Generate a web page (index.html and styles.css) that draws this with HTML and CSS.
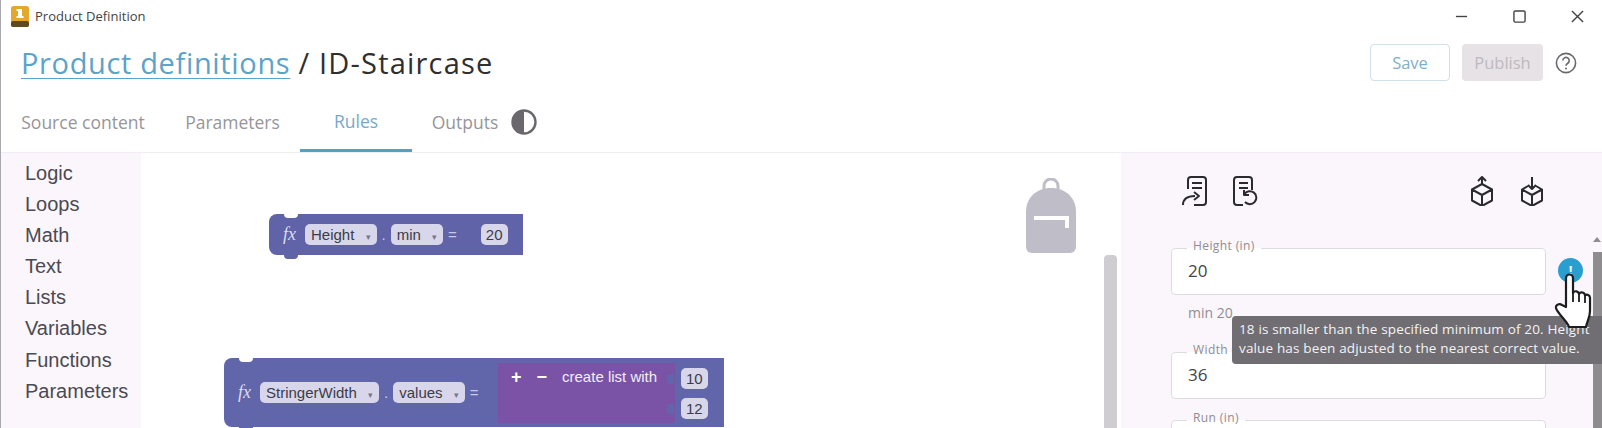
FILE: index.html
```html
<!DOCTYPE html>
<html lang="en">
<head>
  <meta charset="UTF-8" />
  <title>Product Definition</title>
  <link rel="stylesheet" href="styles.css">
</head>
<body>
  <div class="window">

    <div class="titlebar">
      <svg class="app-icon" viewBox="0 0 18 21">
        <rect width="18" height="21" rx="2.5" fill="#e3a92c"/>
        <rect y="15" width="18" height="6" rx="2" fill="#5d4a1e"/>
        <rect x="7" y="3" width="4" height="9" fill="#fff"/>
        <rect x="5.5" y="3" width="4" height="2" fill="#fff"/>
        <rect x="5.5" y="10" width="7" height="2" fill="#fff"/>
      </svg>
      <div class="app-name">Product Definition</div>
      <div class="win-controls">
        <svg viewBox="0 0 14 14"><path d="M1 7h12" /></svg>
        <svg viewBox="0 0 14 14"><rect x="1" y="1" width="12" height="12" rx="1.5" /></svg>
        <svg viewBox="0 0 14 14"><path d="M1 1l12 12M13 1L1 13" /></svg>
      </div>
    </div>

    <div class="heading">
      <div class="crumb"><a class="crumb-link">Product definitions</a> <span class="crumb-sep">/</span> <span class="crumb-name">ID-Staircase</span></div>
      <div class="actions">
        <button class="btn btn-save">Save</button>
        <button class="btn btn-publish">Publish</button>
        <svg class="help" viewBox="0 0 22 22">
          <circle cx="11" cy="11" r="9.6" />
          <path d="M7.800 8.600a3.200 3.200 0 1 1 4.900 2.700c-1.100.7-1.700 1.200-1.700 2.500" />
          <circle class="dot" cx="11" cy="16.600" r="1" />
        </svg>
      </div>
    </div>

    <div class="tabs">
      <div class="tab tab-source">Source content</div>
      <div class="tab tab-params">Parameters</div>
      <div class="tab tab-rules active">Rules</div>
      <div class="tab tab-outputs">Outputs</div>
      <svg class="half" viewBox="0 0 26 26">
        <circle cx="13" cy="13" r="11.500" fill="#fff" stroke="#6a686c" stroke-width="2.400"/>
        <path d="M13 1.500a11.500 11.500 0 0 0 0 23z" fill="#6a686c"/>
      </svg>
    </div>

    <div class="main">
      <div class="toolbox">
        <div class="cat">Logic</div>
        <div class="cat">Loops</div>
        <div class="cat">Math</div>
        <div class="cat">Text</div>
        <div class="cat">Lists</div>
        <div class="cat">Variables</div>
        <div class="cat">Functions</div>
        <div class="cat">Parameters</div>
      </div>

      <div class="workspace">
        <div class="block block-min">
          <span class="fx">fx</span>
          <span class="chip">Height <i class="caret">▾</i></span>
          <span class="op">.</span>
          <span class="chip">min <i class="caret">▾</i></span>
          <span class="op">=</span>
          <span class="chip chip-num">20</span>
        </div>

        <div class="block block-list">
          <span class="fx">fx</span>
          <span class="chip">StringerWidth <i class="caret">▾</i></span>
          <span class="op">.</span>
          <span class="chip">values <i class="caret">▾</i></span>
          <span class="op">=</span>
          <div class="list-block">
            <div class="list-label"><b>+</b><b>−</b><span>create list with</span></div>
            <div class="list-items">
              <span class="chip chip-num">10</span>
              <span class="chip chip-num">12</span>
            </div>
          </div>
        </div>

        <svg class="backpack" viewBox="0 0 50 76">
          <path d="M18 12V8a7 7 0 0 1 14 0v4" fill="none" stroke="#bfbdc7" stroke-width="3"/>
          <path d="M25 10C10 10 0 20 0 34v35a6 6 0 0 0 6 6h38a6 6 0 0 0 6-6V34C50 20 40 10 25 10z" fill="#bfbdc7"/>
          <path d="M8 40h33v10" fill="none" stroke="#fff" stroke-width="4"/>
        </svg>

        <div class="ws-scroll"></div>
      </div>

      <div class="panel">
        <div class="panel-body">
          <div class="panel-icons">
            <div class="icon-group">
              <svg viewBox="0 0 26 30">
                <path d="M6 13V4a3 3 0 0 1 3-3h12a3 3 0 0 1 3 3v22a3 3 0 0 1-3 3H12" />
                <path d="M10 7h10M10 12h10" />
                <path d="M1 29c0-6 4-9 12-9M12 16l5 4-5 4" />
              </svg>
              <svg viewBox="0 0 26 30">
                <path d="M10 29H4a3 3 0 0 1-3-3V4a3 3 0 0 1 3-3h12a3 3 0 0 1 3 3v10" />
                <path d="M6 7h9M6 12h9" />
                <path d="M11.500 18a6.500 6.500 0 1 1 .5 8M11 14v5h5" />
              </svg>
            </div>
            <div class="icon-group icon-group-cubes">
              <svg viewBox="0 0 24 30">
                <path d="M12 8l10 5.500v11L12 30 2 24.500v-11zM2 13.500L12 19l10-5.500M12 19v11" />
                <path d="M12 8V1M8 5l4-4 4 4" />
              </svg>
              <svg viewBox="0 0 24 30">
                <path d="M8 10l-6 3.500v11L12 30l10-5.500v-11L16 10M2 13.500L12 19l10-5.500M12 19v11" />
                <path d="M12 1v12M8 9l4 4 4-4" />
              </svg>
            </div>
          </div>

          <div class="field-row">
            <fieldset class="field">
              <legend>Height (in)</legend>
              <div class="value">20</div>
            </fieldset>
            <div class="info">!</div>
          </div>
          <div class="hint">min 20</div>

          <div class="field-row">
            <fieldset class="field">
              <legend>Width (in)</legend>
              <div class="value">36</div>
            </fieldset>
          </div>

          <div class="field-row field-run">
            <fieldset class="field">
              <legend>Run (in)</legend>
            </fieldset>
          </div>
        </div>

        <div class="panel-scroll">
          <div class="scroll-arrow"></div>
          <div class="scroll-thumb"></div>
        </div>

        <div class="tooltip">18 is smaller than the specified minimum of 20. Height value has been adjusted to the nearest correct value.</div>

        <svg class="hand" viewBox="0 0 38 56">
          <path d="M12 34V5a3.500 3.500 0 0 1 7 0v15a3.200 3.200 0 0 1 6 1 3.200 3.200 0 0 1 6 1.500 3 3 0 0 1 5 2V38c0 7-3 10-4 16H15c-1-5-12-14-13-19-.5-3 3-5 6-3z" fill="#fff" stroke="#1d1d1f" stroke-width="2.200" stroke-linejoin="round"/>
          <path d="M19 20v9M25 21v8M31 23v7" fill="none" stroke="#1d1d1f" stroke-width="1.800"/>
        </svg>
      </div>
    </div>

  </div>
</body>
</html>
```

FILE: styles.css
```css
html, body {
  margin: 0;
  padding: 0;
  height: 428px;
  overflow: hidden;
  background: #fff;
}

body {
  font-family: 'Open Sans', sans-serif;
  color: #3c3c3c;
}

.window {
  height: 428px;
  display: flex;
  flex-direction: column;
  border-left: 1px solid #a9a9ad;
  box-sizing: border-box;
}

/* title bar */
.titlebar {
  height: 34px;
  flex: none;
  display: flex;
  align-items: center;
  padding: 0 0 2px 10px;
  box-sizing: border-box;
}

.app-icon {
  width: 18px;
  height: 21px;
  margin-right: 6px;
}

.app-name {
  font-size: 13px;
  color: #444;
}

.win-controls {
  margin-left: auto;
  display: flex;
  gap: 45px;
  padding-right: 18px;
}

.win-controls svg {
  width: 13px;
  height: 13px;
  fill: none;
  stroke: #444;
  stroke-width: 1.5;
}

/* heading row */
.heading {
  height: 54px;
  flex: none;
  display: flex;
  align-items: center;
  justify-content: space-between;
  padding: 3px 25px 0 20px;
  box-sizing: border-box;
}

.crumb {
  font-size: 29px;
  color: #2f2f2f;
  letter-spacing: 0.65px;
}

.crumb-link {
  color: #5ba3c9;
  text-decoration: underline;
  text-decoration-thickness: 1px;
  text-underline-offset: 4px;
}

.crumb-name {
  letter-spacing: 1.2px;
  margin-left: 1px;
}

.actions {
  display: flex;
  align-items: center;
}

.btn {
  width: 80px;
  height: 37px;
  border-radius: 4px;
  font-family: 'Open Sans', sans-serif;
  font-size: 16.5px;
  padding: 0;
}

.btn-save {
  background: #fff;
  border: 1px solid #cfe0e8;
  color: #7fb0c9;
  margin-right: 12px;
}

.btn-publish {
  background: #e6e2e6;
  border: none;
  color: #bdbabf;
  width: 81px;
  margin-right: 12px;
}

.help {
  width: 22px;
  height: 22px;
  fill: none;
  stroke: #6a686c;
  stroke-width: 1.6;
}

.help .dot {
  fill: #6a686c;
  stroke: none;
}

/* tabs */
.tabs {
  height: 65px;
  flex: none;
  display: flex;
  align-items: center;
  border-bottom: 1px solid #f0eef1;
  box-sizing: border-box;
  padding-left: 20px;
}

.tab {
  height: 100%;
  box-sizing: border-box;
  display: flex;
  align-items: center;
  justify-content: center;
  padding-top: 4px;
  font-size: 17.5px;
  color: #97959a;
  white-space: nowrap;
}

.tab-source { width: 124px; margin-right: 41px; }
.tab-params { width: 93px; margin-right: 21px; }
.tab-rules { width: 112px; margin-right: 20px; }
.tab-outputs { width: 66px; margin-right: 13px; }

.tab.active {
  color: #75a9c9;
  border-bottom: 3px solid #4fa3c7;
}

.half {
  width: 26px;
  height: 26px;
  margin-top: 4px;
}

/* main area */
.main {
  flex: 1;
  min-height: 0;
  display: flex;
  position: relative;
  overflow: hidden;
}

.toolbox {
  width: 140px;
  flex: none;
  background: #fbf6fc;
  padding-top: 4.5px;
  box-sizing: border-box;
}

.cat {
  height: 31.2px;
  line-height: 31.2px;
  padding-left: 24px;
  font-family: 'Liberation Sans', sans-serif;
  font-size: 20px;
  color: #4a4a52;
}

.workspace {
  flex: 1;
  position: relative;
  overflow: hidden;
}

/* blocks sit on a free canvas */
.block {
  position: absolute;
  display: flex;
  align-items: center;
  background: #6063a8;
  border-radius: 8px 0 0 8px;
  font-family: 'Liberation Sans', sans-serif;
  color: #fff;
  box-sizing: border-box;
}

.block::before {
  content: '';
  position: absolute;
  top: 0;
  left: 15px;
  width: 14px;
  height: 4px;
  background: #fff;
  border-radius: 0 0 8px 8px;
}

.block::after {
  content: '';
  position: absolute;
  bottom: -4px;
  left: 15px;
  width: 14px;
  height: 4px;
  background: inherit;
  border-radius: 0 0 8px 8px;
}

.block-min {
  left: 128px;
  top: 61px;
  width: 254px;
  height: 41px;
  padding-left: 14px;
}

.block-list {
  left: 83px;
  top: 205px;
  width: 500px;
  height: 69px;
  padding-left: 14px;
  background: #6165aa;
}

.fx {
  font-family: 'Liberation Serif', serif;
  font-style: italic;
  font-size: 18px;
  color: #dcdcf0;
  margin-right: 9px;
}

.chip {
  background: #d8d6ea;
  color: #3c3c48;
  border-radius: 5px;
  font-size: 15px;
  height: 21px;
  line-height: 21px;
  padding: 0 6px;
  white-space: nowrap;
}

.caret {
  font-style: normal;
  font-size: 9px;
  color: #77768a;
  margin-left: 7px;
}

.op {
  color: #c8cae6;
  font-size: 15px;
  margin: 0 5px;
}

.block-min .chip-num {
  margin-left: 19px;
  padding: 0 5px;
}

.list-block {
  position: absolute;
  left: 274px;
  top: 5px;
  width: 177px;
  height: 60px;
  display: flex;
  background: #7a53a6;
}

.list-label {
  flex: 1;
  display: flex;
  gap: 15px;
  padding: 5px 0 0 13px;
  font-size: 15px;
  color: #f2eef8;
}

.list-label b {
  font-size: 18px;
  line-height: 18px;
  color: #fff;
}

.list-items {
  position: absolute;
  left: 183px;
  top: 5px;
  display: flex;
  flex-direction: column;
  gap: 9px;
}

.block-list .chip-num {
  position: relative;
  padding: 0 5px;
}

.block-list .chip-num::before {
  content: '';
  position: absolute;
  left: -14px;
  top: 6px;
  width: 7px;
  height: 10px;
  background: #6165aa;
  border-radius: 3px 0 0 3px;
}

.backpack {
  position: absolute;
  left: 885px;
  top: 25px;
  width: 50px;
  height: 76px;
}

.ws-scroll {
  position: absolute;
  left: 963px;
  top: 102px;
  width: 13px;
  height: 173px;
  border-radius: 4px 4px 0 0;
  background: #cfcdd1;
}

/* right panel */
.panel {
  width: 481px;
  flex: none;
  display: flex;
  background: #fbf6fc;
  position: relative;
}

.panel-body {
  flex: 1;
  padding: 23px 0 0 50px;
  box-sizing: border-box;
  overflow: hidden;
}

.panel-icons {
  display: flex;
  justify-content: space-between;
  padding: 0 48px 0 11px;
}

.icon-group {
  display: flex;
  gap: 25px;
}

.icon-group-cubes {
  gap: 24px;
}

.icon-group svg {
  width: 26px;
  height: 30px;
  fill: none;
  stroke: #2b2b2f;
  stroke-width: 2;
  stroke-linejoin: round;
}

.field-row {
  display: flex;
  align-items: center;
  margin-top: 34px;
}

.field-row + .hint + .field-row {
  margin-top: 0;
}

.field-run {
  margin-top: 13px;
}

.field {
  width: 375px;
  height: 55px;
  box-sizing: border-box;
  margin: 0;
  padding: 0 16px;
  border: 1px solid #dedbe0;
  border-radius: 4px;
  background: #fff;
  flex: none;
}

.field legend {
  font-size: 12px;
  color: #8f8d92;
  padding: 0 6px 4px;
  margin-left: -1px;
  line-height: 12px;
  letter-spacing: 0.4px;
}

.value {
  font-size: 17px;
  line-height: 34px;
  margin-top: -2px;
  color: #444;
}

.info {
  width: 25px;
  height: 25px;
  margin-left: 12px;
  margin-top: 6px;
  border-radius: 50%;
  background: #2b9ed0;
  color: #e8f4fa;
  font-size: 13px;
  font-weight: bold;
  line-height: 25px;
  text-align: center;
}

.hint {
  font-size: 14px;
  color: #8f8d92;
  padding-left: 17px;
  height: 49px;
  line-height: 36px;
}

.panel-scroll {
  width: 9px;
  flex: none;
}

.scroll-arrow {
  width: 0;
  height: 0;
  margin-top: 84px;
  border-left: 4px solid transparent;
  border-right: 4px solid transparent;
  border-bottom: 5px solid #8f8c90;
}

.scroll-thumb {
  margin-top: 10px;
  height: 176px;
  background: #8f8c90;
}

.tooltip {
  position: absolute;
  left: 111px;
  top: 163px;
  width: 371px;
  height: 48px;
  box-sizing: border-box;
  padding: 4px 2px 0 7px;
  background: #706e73;
  border-radius: 4px 0 0 4px;
  color: #f4f3f5;
  font-size: 13.500px;
  letter-spacing: 0.15px;
  line-height: 19px;
}

.hand {
  position: absolute;
  left: 433px;
  top: 120px;
  width: 38px;
  height: 56px;
}
```
